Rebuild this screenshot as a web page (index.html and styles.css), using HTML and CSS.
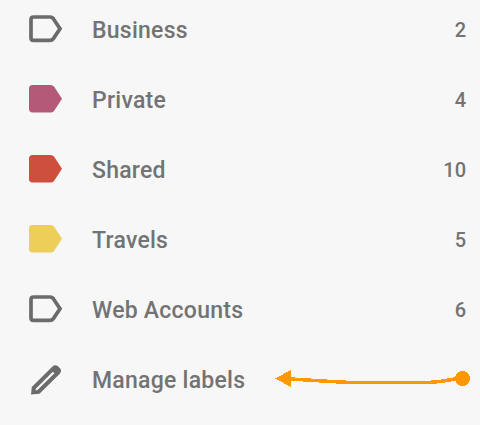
FILE: index.html
```html
<!DOCTYPE html>
<html lang="en">
<head>
    <meta charset="UTF-8">
    <title>Labels</title>
    <link rel="stylesheet" href="styles.css">
</head>
<body>
    <ul class="label-list">
        <li class="label-row">
            <svg class="label-icon outline" viewBox="0 0 34 28"><path d="M4.500 2H21Q23 2 24.200 3.500L31 13.700L24.200 23.900Q23 25.400 21 25.400H4.500Q2 25.400 2 23V4.500Q2 2 4.500 2Z"/></svg>
            <span class="label-name">Business</span>
            <span class="label-count">2</span>
        </li>
        <li class="label-row">
            <svg class="label-icon private" viewBox="0 0 34 28"><path d="M3.500 0H21.500Q23.800 0 25 1.500L33 13.700L25 25.900Q23.800 27.400 21.500 27.400H3.500Q0 27.400 0 24V3.500Q0 0 3.500 0Z"/></svg>
            <span class="label-name">Private</span>
            <span class="label-count">4</span>
        </li>
        <li class="label-row">
            <svg class="label-icon shared" viewBox="0 0 34 28"><path d="M3.500 0H21.500Q23.800 0 25 1.500L33 13.700L25 25.900Q23.800 27.400 21.500 27.400H3.500Q0 27.400 0 24V3.500Q0 0 3.500 0Z"/></svg>
            <span class="label-name">Shared</span>
            <span class="label-count">10</span>
        </li>
        <li class="label-row">
            <svg class="label-icon travels" viewBox="0 0 34 28"><path d="M3.500 0H21.500Q23.800 0 25 1.500L33 13.700L25 25.900Q23.800 27.400 21.500 27.400H3.500Q0 27.400 0 24V3.500Q0 0 3.500 0Z"/></svg>
            <span class="label-name">Travels</span>
            <span class="label-count">5</span>
        </li>
        <li class="label-row">
            <svg class="label-icon outline" viewBox="0 0 34 28"><path d="M4.500 2H21Q23 2 24.200 3.500L31 13.700L24.200 23.900Q23 25.400 21 25.400H4.500Q2 25.400 2 23V4.500Q2 2 4.500 2Z"/></svg>
            <span class="label-name">Web Accounts</span>
            <span class="label-count">6</span>
        </li>
        <li class="label-row">
            <svg class="label-icon pencil" viewBox="0 0 30 30"><path fill-rule="evenodd" d="M0 29.500L.8 22L21.500 1.500Q24 -.8 26.800 1L29.200 3.500Q31 6 28.800 8.800L8.500 28.800ZM5 23.500L4.500 25.500L6.500 25L23.500 8.300L21.800 6.700Z"/></svg>
            <span class="label-name">Manage labels</span>
        </li>
    </ul>

    <svg class="callout" viewBox="0 0 200 30">
        <path class="callout-line" d="M21 10L45 11.500L61 12.500L81 13.500L158 13.500L170 12.500L185 10"/>
        <path class="callout-head" d="M5 9.500L21 1V18Z"/>
        <circle class="callout-dot" cx="192.500" cy="9.500" r="7.500"/>
    </svg>
</body>
</html>
```

FILE: styles.css
```css
body {
    margin: 0;
    width: 480px;
    height: 425px;
    position: relative;
    overflow: hidden;
    background: #f7f7f7;
    font-family: Roboto, "Liberation Sans", sans-serif;
    color: #737373;
}

.label-list {
    list-style: none;
    margin: 0;
    padding: 0 14px 0 29px;
    display: flex;
    flex-direction: column;
    gap: 10px;
}

.label-row {
    height: 60px;
    display: flex;
    align-items: center;
    font-size: 23px;
    font-weight: 500;
}

.label-icon {
    width: 34px;
    height: 28px;
    flex: none;
    margin: 0 29px 3px 0;
}

.label-name {
    flex: 1;
    padding-top: 1px;
    letter-spacing: 0.25px;
}

.label-count {
    font-size: 20px;
}

.outline path {
    fill: none;
    stroke: #6b6b6b;
    stroke-width: 3.700;
}

.private path { fill: #b45a78; }
.shared path { fill: #cf4f3f; }
.travels path { fill: #ecce58; }

.pencil {
    width: 30px;
    height: 30px;
    margin: 0 31px 0 2px;
}

.pencil path { fill: #6b6b6b; }

.callout {
    position: absolute;
    left: 270px;
    top: 369px;
    width: 200px;
    height: 30px;
    overflow: visible;
    shape-rendering: crispEdges;
}

.callout-line {
    fill: none;
    stroke: #ff9800;
    stroke-width: 3.500;
}

.callout-head,
.callout-dot {
    fill: #ff9800;
}
```
